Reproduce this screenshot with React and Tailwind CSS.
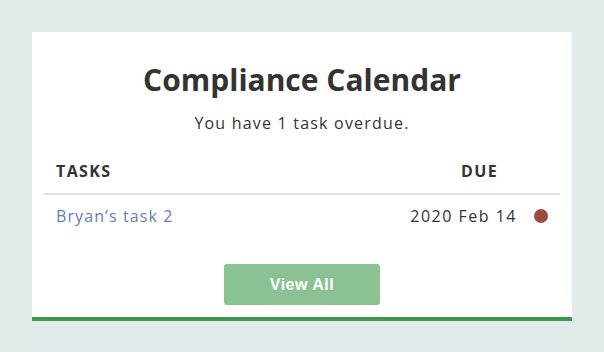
export default function App() {
  return (
    <div className="h-[352px] bg-[#e2eaeb] p-8 font-['Open_Sans',sans-serif] text-[#333]">
      <div className="border-b-4 border-[#3d9a4a] bg-white px-3 pt-[30px] pb-3">
        <h2 className="text-center text-[30px] font-bold leading-9">
          Compliance Calendar
        </h2>
        <p className="mt-[13px] text-center text-base leading-6 tracking-[1.2px]">
          You have 1 task overdue.
        </p>

        <div className="mt-[26px] flex border-b-2 border-[#dddddd] pb-3 pl-3 pr-[62px] text-base font-bold leading-5 tracking-[1.4px]">
          <span className="flex-1">TASKS</span>
          <span>DUE</span>
        </div>
        <div className="flex items-center pt-[9px] pl-3 pr-3 text-base leading-6">
          <a href="#" className="flex-1 tracking-[1.1px] text-[#6281b3]">
            Bryan’s task 2
          </a>
          <span className="tracking-[1.5px]">2020 Feb 14</span>
          <span className="ml-[17px] h-[14px] w-[14px] rounded-full bg-[#9c4c3c]" />
        </div>

        <div className="mt-[36px] flex justify-center">
          <button className="h-[41px] w-[156px] rounded-[3px] bg-[#8bc294] font-['Liberation_Sans',Arial,sans-serif] text-base font-bold tracking-[0.5px] text-white">
            View All
          </button>
        </div>
      </div>
    </div>
  );
}
